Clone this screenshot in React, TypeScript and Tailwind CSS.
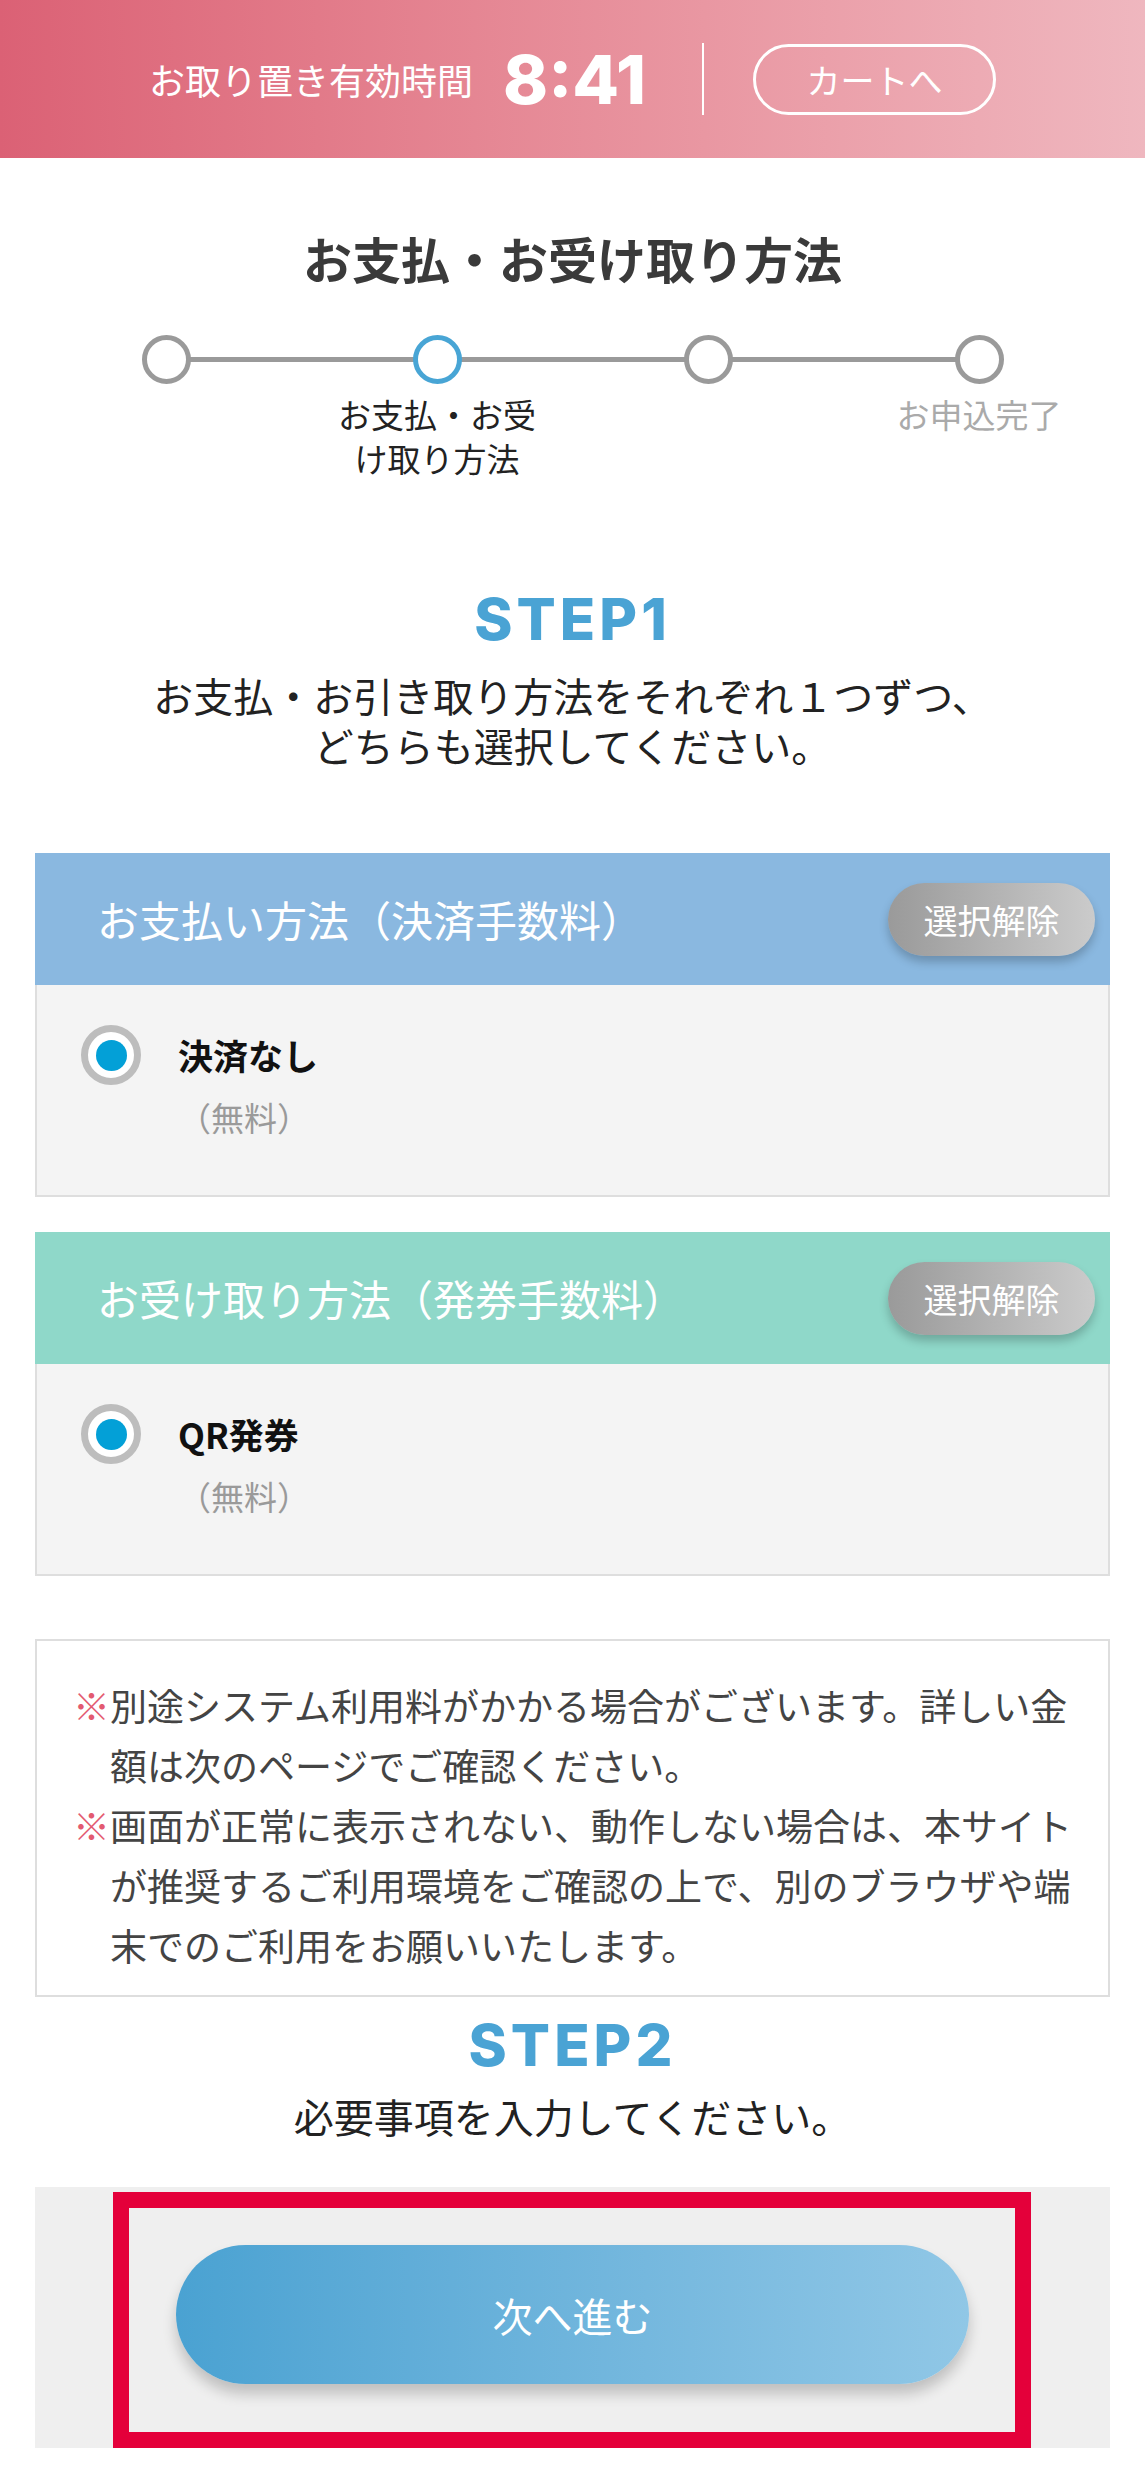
import React from 'react';

const jp = { fontFamily: '"Noto Sans CJK JP", "Noto Sans", sans-serif' };
const latin = { fontFamily: 'Inter, "Liberation Sans", sans-serif' };

const steps = [
  { label: '', active: false },
  { label: 'お支払・お受け取り方法', active: true },
  { label: '', active: false },
  { label: 'お申込完了', active: false, muted: true },
];

const Radio = () => (
  <span className="flex h-[60px] w-[60px] shrink-0 items-center justify-center rounded-full border-[7px] border-[#bdbdbd] bg-white">
    <span className="block h-[31px] w-[31px] rounded-full bg-[#03a0d7]" />
  </span>
);

const ChoiceCard = ({ title, option, headerClass }: { title: string; option: string; headerClass: string }) => (
  <section className="mx-[35px]">
    <div className={`flex h-[132px] items-center justify-between pl-[62px] pr-[15px] ${headerClass}`}>
      <h2 className="text-[42px] leading-none text-white">{title}</h2>
      <button className="h-[73px] w-[207px] rounded-full bg-gradient-to-r from-[#9a9a9a] to-[#cbcbcb] text-[34px] text-white shadow-[0_6px_10px_rgba(0,0,0,0.22)]">
        選択解除
      </button>
    </div>
    <div className="h-[212px] border-x-2 border-b-2 border-[#dedede] bg-[#f4f4f4] pl-[44px] pt-[40px]">
      <label className="flex items-center gap-[37px]">
        <Radio />
        <span className="text-[35px] font-bold leading-[50px] text-[#111]">{option}</span>
      </label>
      <p className="mt-[7px] pl-[97px] text-[33px] leading-[50px] text-[#9a9a9a]">（無料）</p>
    </div>
  </section>
);

export default function App() {
  return (
    <div className="w-full bg-white pb-[27px]" style={jp}>
      {/* timer header */}
      <header className="flex h-[158px] items-center justify-center bg-gradient-to-r from-[#db6175] to-[#efb7bf] text-white">
        <span className="text-[36px]">お取り置き有効時間</span>
        <span className="ml-[30px] text-[68px] font-extrabold leading-none" style={latin}>8:41</span>
        <span className="ml-[56px] h-[72px] w-[2px] bg-white" />
        <button className="ml-[49px] h-[71px] w-[243px] rounded-full border-[3px] border-white text-[34px]">カートへ</button>
      </header>

      <h1 className="mt-[64px] text-center text-[49px] font-bold leading-[72px] text-[#3a3a3a]">お支払・お受け取り方法</h1>

      {/* progress */}
      <div className="relative mx-auto mt-[41px] flex w-[1084px]">
        <div className="absolute left-[135px] right-[135px] top-[22px] h-[5px] bg-[#9a9a9a]" />
        {steps.map((s, i) => (
          <div key={i} className="relative flex w-[271px] flex-col items-center">
            <span
              className={`block h-[49px] w-[49px] rounded-full border-[5px] bg-white ${s.active ? 'border-[#48a5d5]' : 'border-[#9a9a9a]'}`}
            />
            <p className={`mt-[8px] w-[220px] text-center text-[33px] leading-[44px] ${s.muted ? 'text-[#aaaaaa]' : 'text-[#222]'}`}>
              {s.label}
            </p>
          </div>
        ))}
      </div>

      <h3 className="mt-[104px] text-center text-[58px] font-extrabold leading-[70px] tracking-[0.07em] text-[#4aa3d4]" style={latin}>
        STEP1
      </h3>
      <p className="mt-[16px] text-center text-[40px] leading-[50px] text-[#222]">
        お支払・お引き取り方法をそれぞれ１つずつ、
        <br />
        どちらも選択してください。
      </p>

      <div className="mt-[83px]">
        <ChoiceCard title="お支払い方法（決済手数料）" option="決済なし" headerClass="bg-[#8ab8e0]" />
      </div>
      <div className="mt-[35px]">
        <ChoiceCard title="お受け取り方法（発券手数料）" option="QR発券" headerClass="bg-[#8fd8c9]" />
      </div>

      {/* notice */}
      <div className="mx-[35px] mt-[63px] border-2 border-[#dedede] bg-white pb-[20px] pl-[36px] pr-[30px] pt-[34px] text-[37px] leading-[60px] text-[#444]">
        <p className="pl-[1em] -indent-[1em]">
          <span className="text-[#e35a70]">※</span>別途システム利用料がかかる場合がございます。詳しい金額は次のページでご確認ください。
        </p>
        <p className="pl-[1em] -indent-[1em]">
          <span className="text-[#e35a70]">※</span>画面が正常に表示されない、動作しない場合は、本サイトが推奨するご利用環境をご確認の上で、別のブラウザや端末でのご利用をお願いいたします。
        </p>
      </div>

      <h3 className="mt-[13px] text-center text-[58px] font-extrabold leading-[70px] tracking-[0.07em] text-[#4aa3d4]" style={latin}>
        STEP2
      </h3>
      <p className="mt-[11px] text-center text-[40px] leading-[50px] text-[#222]">必要事項を入力してください。</p>

      {/* submit */}
      <div className="relative mx-[35px] mt-[46px] h-[261px] bg-[#efefef] pt-[58px]">
        <button className="mx-auto block h-[139px] w-[793px] rounded-full bg-gradient-to-r from-[#4aa2d2] to-[#90c7e6] text-[40px] text-white shadow-[0_10px_14px_rgba(0,0,0,0.2)]">
          次へ進む
        </button>
        <div className="pointer-events-none absolute bottom-0 left-[78px] top-[5px] w-[918px] border-[16px] border-[#e4003a]" />
      </div>
    </div>
  );
}
